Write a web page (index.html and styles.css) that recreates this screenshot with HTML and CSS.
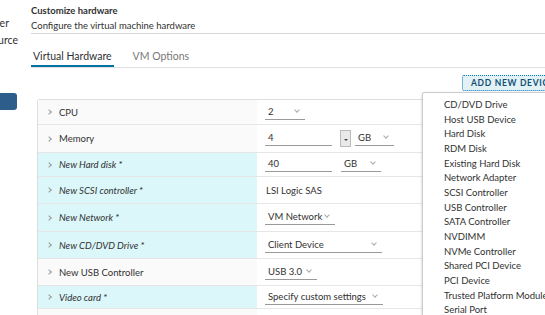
FILE: index.html
```html
<!DOCTYPE html>
<html>
  <head>
    <meta name="viewport" content="width=device-width, initial-scale=1.0" />
    <link rel="stylesheet" href="styles.css">
  </head>
  <body>
    <div id="wrap">
      <aside class="steps">
        <div class="step s2"><span class="step-text">Select a name and folder</span></div>
        <div class="step s3"><span class="step-text">Select a compute resource</span></div>
        <div class="step-btn"></div>
      </aside>
      <main class="panel">
        <header class="panel-head">
          <h1>Customize hardware</h1>
          <p>Configure the virtual machine hardware</p>
        </header>
        <ul class="tabs">
          <li class="active">Virtual Hardware</li>
          <li>VM Options</li>
        </ul>
        <div class="toolbar">
          <button class="add-btn">ADD NEW DEVICE</button>
        </div>
        <div class="hw-table">
          <div class="row r1">
            <div class="label"><span class="caret"></span>CPU</div>
            <div class="value"><span class="select w40">2</span></div>
          </div>
          <div class="row r2">
            <div class="label"><span class="caret"></span>Memory</div>
            <div class="value">
              <span class="input w67">4</span>
              <span class="spin"></span>
              <span class="select w39">GB</span>
            </div>
          </div>
          <div class="row r3 new">
            <div class="label"><span class="caret"></span>New Hard disk *</div>
            <div class="value">
              <span class="input w67">40</span>
              <span class="select w40 gap">GB</span>
            </div>
          </div>
          <div class="row r4 new">
            <div class="label"><span class="caret"></span>New SCSI controller *</div>
            <div class="value"><span class="plain">LSI Logic SAS</span></div>
          </div>
          <div class="row r5 new">
            <div class="label"><span class="caret"></span>New Network *</div>
            <div class="value"><span class="select w70">VM Network</span></div>
          </div>
          <div class="row r6 new">
            <div class="label"><span class="caret"></span>New CD/DVD Drive *</div>
            <div class="value"><span class="select w117">Client Device</span></div>
          </div>
          <div class="row r7">
            <div class="label"><span class="caret"></span>New USB Controller</div>
            <div class="value"><span class="select w52">USB 3.0</span></div>
          </div>
          <div class="row r8 new">
            <div class="label"><span class="caret"></span>Video card *</div>
            <div class="value"><span class="select w118">Specify custom settings</span></div>
          </div>
          <div class="row r9">
            <div class="label"></div>
            <div class="value"></div>
          </div>
        </div>
        <ul class="device-menu">
          <li>CD/DVD Drive</li>
          <li>Host USB Device</li>
          <li>Hard Disk</li>
          <li>RDM Disk</li>
          <li>Existing Hard Disk</li>
          <li>Network Adapter</li>
          <li>SCSI Controller</li>
          <li>USB Controller</li>
          <li>SATA Controller</li>
          <li>NVDIMM</li>
          <li>NVMe Controller</li>
          <li>Shared PCI Device</li>
          <li>PCI Device</li>
          <li>Trusted Platform Module</li>
          <li>Serial Port</li>
        </ul>
      </main>
    </div>
  </body>
</html>
```

FILE: styles.css
```css
/* Simple Reset CSS */
* {
  margin: 0;
  padding: 0;
  box-sizing: border-box;
}

html,
body {
  height: 100%;
  overflow: hidden;
}

body {
  font-family: Lato, 'Open Sans', sans-serif;
  font-size: 9.5px;
  color: #313131;
  background-color: #fff;
}

li {
  list-style: none;
}

#wrap {
  display: flex;
  width: 561px;
}

/* 왼쪽 단계 목록 (잘려 보임) */
.steps {
  width: 22px;
  flex-shrink: 0;
  overflow: hidden;
  padding-top: 16px;
}

.step {
  display: flex;
  justify-content: flex-end;
  white-space: nowrap;
  height: 17px;
}

.step-text {
  flex-shrink: 0;
  font-size: 10.5px;
  line-height: 15px;
}

.step.s2 {
  padding-right: 13px;
}

.step.s3 {
  padding-right: 4px;
}

.step-btn {
  width: 17px;
  height: 17px;
  margin-top: 43px;
  border-radius: 0 3px 3px 0;
  background-color: #2d5d8b;
}

.panel {
  position: relative;
  flex: 1;
  padding-left: 9px;
}

.panel-head {
  padding-top: 5px;
  height: 34px;
  border-bottom: 1px solid #d7d7d7;
}

.panel-head h1 {
  font-size: 9.5px;
  font-weight: 700;
  line-height: 12px;
}

.panel-head p {
  margin-top: 2px;
  line-height: 13px;
}

.tabs {
  display: flex;
  margin-top: 13px;
  border-bottom: 1px solid #e0e0e0;
}

.tabs > li {
  font-size: 10.5px;
  line-height: 18px;
  padding: 0 2px;
  margin-right: 17px;
  color: #777;
  border-bottom: 2px solid transparent;
}

.tabs > li.active {
  color: #313131;
  border-bottom-color: #0072a3;
}

.toolbar {
  display: flex;
  justify-content: flex-end;
  padding-top: 7px;
  padding-right: 4px;
}

.add-btn {
  font-family: inherit;
  font-size: 8.5px;
  font-weight: 700;
  letter-spacing: 0.7px;
  color: #0f4f75;
  background-color: #e1f1f6;
  border: 1px dotted #0079b8;
  border-radius: 2px;
  height: 16px;
  width: 95px;
  padding: 0 0 0 8px;
  text-align: left;
  white-space: nowrap;
}

.hw-table {
  margin: 8px 4px 0 6px;
  border: 1px solid #ddd;
  border-bottom: 0;
  border-radius: 3px 3px 0 0;
}

.row {
  display: flex;
  border-top: 1px solid #e6e6e6;
}

.row:first-child {
  border-top: 0;
}

.r1 { height: 24px; }
.r2 { height: 28px; }
.r3 { height: 24px; }
.r4 { height: 27px; }
.r5 { height: 28px; }
.r6 { height: 27px; }
.r7 { height: 27px; }
.r8 { height: 23px; }
.r9 { height: 20px; }

.label {
  display: flex;
  align-items: center;
  width: 219px;
  padding-left: 9px;
  background-color: #fafafa;
  white-space: nowrap;
}

.row.new .label {
  font-style: italic;
  background-color: #dbf7fa;
}

.caret {
  display: inline-block;
  width: 4px;
  height: 4px;
  margin-right: 8px;
  border-top: 1px solid #999;
  border-right: 1px solid #999;
  transform: rotate(45deg);
}

.value {
  flex: 1;
  display: flex;
  align-items: center;
  padding-left: 8px;
  background-color: #fff;
}

.input,
.select {
  position: relative;
  display: inline-block;
  line-height: 14px;
  padding-left: 3px;
  border-bottom: 1px solid #9a9a9a;
}

.select::after {
  content: '';
  position: absolute;
  right: 6px;
  top: 3px;
  width: 3px;
  height: 3px;
  border-right: 1px solid #aaa;
  border-bottom: 1px solid #aaa;
  transform: rotate(45deg);
}

.w40 { width: 40px; }
.w39 { width: 39px; }
.w52 { width: 52px; }
.w67 { width: 67px; }
.w70 { width: 70px; }
.w117 { width: 117px; }
.w118 { width: 118px; }

.gap {
  margin-left: 9px;
}

.spin {
  position: relative;
  display: inline-block;
  width: 11px;
  height: 17px;
  margin: 0 4px 0 8px;
  border: 1px solid #bbb;
  background-color: #e9e9e9;
}

.spin::after {
  content: '';
  position: absolute;
  left: 3px;
  top: 8px;
  border-left: 2px solid transparent;
  border-right: 2px solid transparent;
  border-top: 2px solid #444;
}

.plain {
  padding-left: 1px;
}

/* 장치 추가 드롭다운 */
.device-menu {
  position: absolute;
  left: 400px;
  top: 92px;
  width: 140px;
  height: 240px;
  padding: 5px 0 0 21px;
  background-color: #fff;
  border: 1px solid #ccc;
  border-radius: 2px;
  box-shadow: 0 1px 3px rgba(0, 0, 0, 0.2);
}

.device-menu > li {
  line-height: 14.65px;
  white-space: nowrap;
}
```
